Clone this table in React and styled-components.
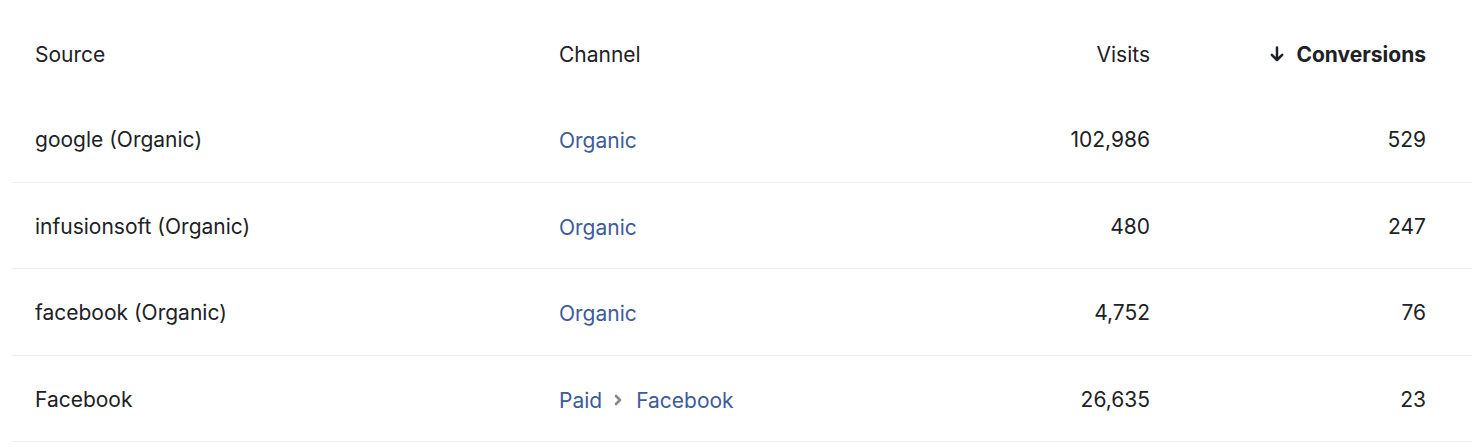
import styled, { createGlobalStyle } from "styled-components";

const GlobalStyle = createGlobalStyle`
  body {
    margin: 0;
    background: #ffffff;
    font-family: Inter, "Liberation Sans", sans-serif;
    color: #202124;
  }
`;

const rows = [
      { source: "google (Organic)", channel: ["Organic"], visits: "102,986", conversions: "529" },
      { source: "infusionsoft (Organic)", channel: ["Organic"], visits: "480", conversions: "247" },
      { source: "facebook (Organic)", channel: ["Organic"], visits: "4,752", conversions: "76" },
      { source: "Facebook", channel: ["Paid", "Facebook"], visits: "26,635", conversions: "23" },
];

const ChevronRight = () => (
      <svg width="10" height="14" viewBox="0 0 10 14" fill="none">
            <path d="M3 3l4 4-4 4" stroke="#85888e" strokeWidth="2.6" strokeLinecap="round" strokeLinejoin="round" />
      </svg>
);

const ArrowDown = () => (
      <svg width="16" height="18" viewBox="0 0 16 18" fill="none">
            <path d="M8 2.5v12.5M2.8 9.8L8 15l5.2-5.2" stroke="#1f2126" strokeWidth="2.5" strokeLinecap="round" strokeLinejoin="round" />
      </svg>
);

const App = () => {
      return (
            <Wrapper>
                  <GlobalStyle />
                  <Table>
                        <HeaderRow>
                              <Cell>Source</Cell>
                              <Cell>Channel</Cell>
                              <Cell $right>Visits</Cell>
                              <Cell $right $bold>
                                    <ArrowDown />
                                    Conversions
                              </Cell>
                        </HeaderRow>
                        {rows.map((r, i) => (
                              <Row key={i}>
                                    <Cell>{r.source}</Cell>
                                    <Cell>
                                          {r.channel.map((c, j) => (
                                                <Crumb key={j}>
                                                      {j > 0 && <ChevronRight />}
                                                      <ChannelLink>{c}</ChannelLink>
                                                </Crumb>
                                          ))}
                                    </Cell>
                                    <Cell $right>{r.visits}</Cell>
                                    <Cell $right>{r.conversions}</Cell>
                              </Row>
                        ))}
                  </Table>
            </Wrapper>
      );
};

export default App;

const Wrapper = styled.div`
      padding-left: 12px;
      width: 1472px;
      box-sizing: border-box;
`;

const Table = styled.div`
      display: flex;
      flex-direction: column;
`;

const HeaderRow = styled.div`
      display: grid;
      grid-template-columns: 524px 391px 200px 276px;
      align-items: center;
      height: 96px;
      padding: 12px 46px 0 23px;
      box-sizing: border-box;
      font-size: 21px;
`;

const Row = styled.div`
      display: grid;
      grid-template-columns: 524px 391px 200px 276px;
      align-items: center;
      height: 86.5px;
      padding: 2px 46px 0 23px;
      box-sizing: border-box;
      border-bottom: 1px solid #f0f0f0;
      font-size: 21px;
`;

const Cell = styled.div`
      display: flex;
      align-items: center;
      justify-content: ${(p) => (p.$right ? "flex-end" : "flex-start")};
      gap: 11px;
      font-weight: ${(p) => (p.$bold ? 700 : 400)};
      color: #202124;
      white-space: nowrap;
`;

const Crumb = styled.span`
      display: inline-flex;
      align-items: center;
      gap: 13px;
      margin-top: 2px;
`;

const ChannelLink = styled.span`
      color: #3d5a9c;
`;
